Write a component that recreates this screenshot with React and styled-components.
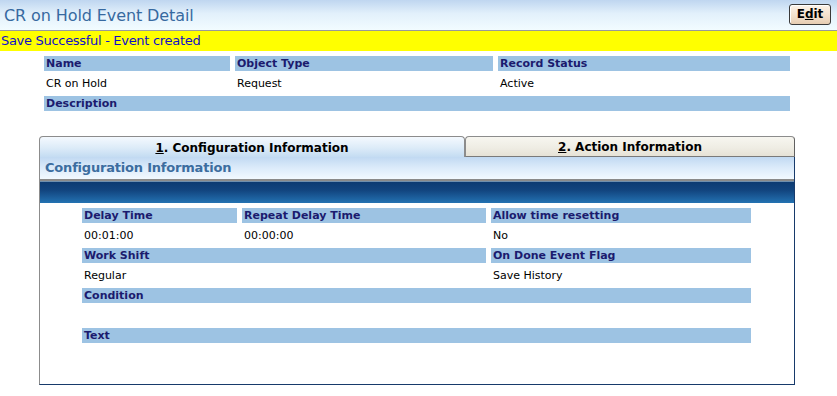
import React from 'react'
import styled, { createGlobalStyle } from 'styled-components'

const GlobalStyle = createGlobalStyle`
  body {
    margin: 0;
    background: #ffffff;
    font-family: 'DejaVu Sans', Verdana, sans-serif;
  }
`

const topFields = [
  { label: 'Name', value: 'CR on Hold' },
  { label: 'Object Type', value: 'Request' },
  { label: 'Record Status', value: 'Active' },
  { label: 'Description', value: '', span: 3 },
]

const configFields = [
  { label: 'Delay Time', value: '00:01:00' },
  { label: 'Repeat Delay Time', value: '00:00:00' },
  { label: 'Allow time resetting', value: 'No' },
  { label: 'Work Shift', value: 'Regular', span: 2 },
  { label: 'On Done Event Flag', value: 'Save History' },
  { label: 'Condition', value: '', span: 3 },
  { label: 'Text', value: '', span: 3 },
]

function FieldGrid({ fields, columns, ...rest }) {
  return (
    <Grid columns={columns} {...rest}>
      {fields.map((f) => (
        <Field key={f.label} span={f.span}>
          <Label>{f.label}</Label>
          <Value>{f.value}</Value>
        </Field>
      ))}
    </Grid>
  )
}

export default function App() {
  return (
    <Page>
      <GlobalStyle />
      <Header>
        <Title>CR on Hold Event Detail</Title>
        <EditButton>
          E<u>d</u>it
        </EditButton>
      </Header>
      <Message>Save Successful - Event created</Message>

      <TopSection>
        <FieldGrid fields={topFields} columns="186px 258px 292px" />
      </TopSection>

      <TabArea>
        <TabRow>
          <Tab active>
            <u>1</u>. Configuration Information
          </Tab>
          <Tab>
            <u>2</u>. Action Information
          </Tab>
        </TabRow>
        <Panel>
          <PanelTitle>Configuration Information</PanelTitle>
          <Band />
          <PanelBody>
            <FieldGrid fields={configFields} columns="155px 244px 260px" />
          </PanelBody>
        </Panel>
      </TabArea>
    </Page>
  )
}

const Page = styled.div`
  width: 837px;
`

const Header = styled.div`
  height: 30px;
  display: flex;
  align-items: center;
  justify-content: space-between;
  padding: 0 6px 0 4px;
  background: linear-gradient(to bottom, #bfd6f0 0%, #e2f0fb 45%, #f2fcff 100%);
  border-bottom: 1px solid #9a9a9a;
`

const Title = styled.h1`
  margin: 0;
  font-size: 16px;
  font-weight: normal;
  color: #3769a0;
  letter-spacing: -0.1px;
`

const EditButton = styled.button`
  height: 21px;
  width: 42px;
  margin-top: -2px;
  padding: 0;
  border: 1px solid #3a3a3a;
  border-radius: 3px;
  background: linear-gradient(to bottom, #fdf3e8 0%, #f3dfca 60%, #e6cdb2 100%);
  box-shadow: inset 1px 1px 0 #ffffff;
  font-family: 'DejaVu Sans', Verdana, sans-serif;
  font-size: 12px;
  font-weight: bold;
  color: #000;
`

const Message = styled.div`
  height: 20px;
  line-height: 20px;
  background: #ffff00;
  color: #1010c8;
  font-size: 13px;
  padding-left: 1px;
  letter-spacing: -0.3px;
`

const TopSection = styled.div`
  padding: 5px 0 0 44px;
`

const Grid = styled.div`
  display: grid;
  grid-template-columns: ${(p) => p.columns};
  column-gap: 5px;
`

const Field = styled.div`
  grid-column: span ${(p) => p.span || 1};
`

const Label = styled.div`
  height: 15px;
  line-height: 15px;
  background: #9dc3e3;
  color: #1b1b6e;
  font-size: 11px;
  font-weight: bold;
  padding-left: 2px;
  white-space: nowrap;
`

const Value = styled.div`
  height: 25px;
  line-height: 25px;
  color: #000;
  font-size: 11px;
  padding-left: 2px;
`

const TabArea = styled.div`
  margin-left: 39px;
  width: 756px;
`

const TabRow = styled.div`
  display: flex;
  height: 21px;
`

const Tab = styled.div`
  box-sizing: border-box;
  width: ${(p) => (p.active ? '426px' : '330px')};
  display: flex;
  align-items: center;
  justify-content: center;
  padding-top: 1px;
  font-size: 12px;
  font-weight: bold;
  color: #000;
  border: 1px solid #8c8c8c;
  border-bottom: none;
  border-right-color: ${(p) => (p.active ? '#8c8c8c' : '#606060')};
  border-radius: 4px 4px 0 0;
  background: ${(p) =>
    p.active
      ? 'linear-gradient(to bottom, #f4f9fe 0%, #dcebf8 55%, #c4dcf2 100%)'
      : 'linear-gradient(to bottom, #f7f6f0 0%, #efede4 55%, #e6e2d6 100%)'};
  ${(p) => !p.active && 'border-bottom: 1px solid #7a7a7a;'}
`

const Panel = styled.div`
  height: 228px;
  box-sizing: border-box;
  border-left: 1px solid #8c8c8c;
  border-right: 1px solid #173a6b;
  border-bottom: 1px solid #173a6b;
`

const PanelTitle = styled.div`
  height: 22px;
  line-height: 22px;
  padding-left: 5px;
  font-size: 13px;
  font-weight: bold;
  letter-spacing: -0.2px;
  color: #3c6d9f;
  background: linear-gradient(to bottom, #c1d9f2 0%, #dcebfa 50%, #f2f9ff 100%);
  border-bottom: 2px solid #8a8a8a;
`

const Band = styled.div`
  height: 21px;
  background: linear-gradient(to bottom, #0c3a72 0%, #12457f 40%, #2372b2 100%);
  border-top: 1px solid #6f8fae;
`

const PanelBody = styled.div`
  padding: 5px 0 0 42px;
`
